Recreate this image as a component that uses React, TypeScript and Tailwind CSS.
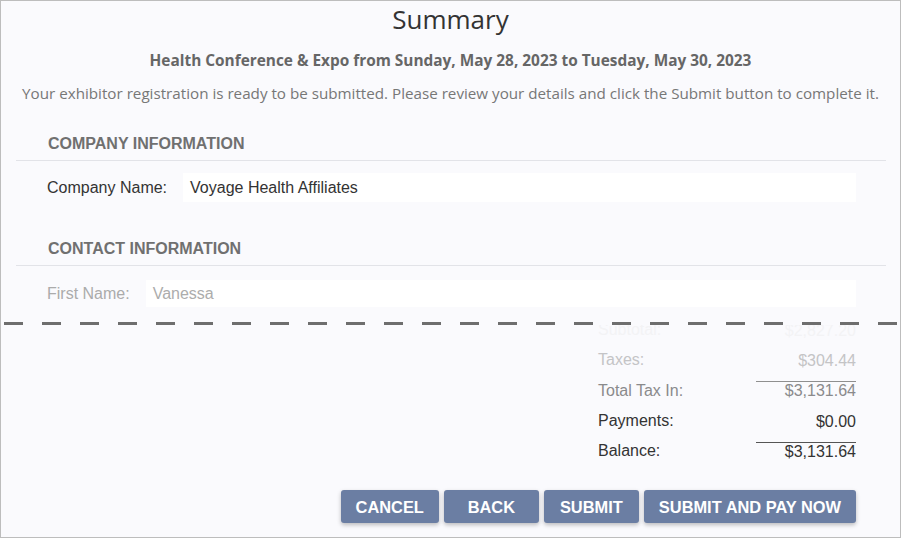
const totals = [
  { label: "Subtotal:", value: "$2,827.20", tone: "text-[#f3f3f5]", line: "border-transparent" },
  { label: "Taxes:", value: "$304.44", tone: "text-[#c4c4c6]", line: "border-transparent" },
  { label: "Total Tax In:", value: "$3,131.64", tone: "text-[#8a8a8c]", line: "border-[#8f8f8f]" },
  { label: "Payments:", value: "$0.00", tone: "text-[#333]", line: "border-transparent" },
  { label: "Balance:", value: "$3,131.64", tone: "text-[#333]", line: "border-[#555]" },
];

const buttons = ["CANCEL", "BACK", "SUBMIT", "SUBMIT AND PAY NOW"];

function SectionHeader({ title, className }: { title: string; className: string }) {
  return (
    <div className={`ml-[15px] mr-[14px] border-b border-[#e2e3e8] pb-[6px] pl-[32px] ${className}`}>
      <h3 className="font-['Liberation_Sans',Arial,sans-serif] text-[16px] font-bold leading-[20px] text-[#707070]">
        {title}
      </h3>
    </div>
  );
}

export default function App() {
  return (
    <div className="flex h-[538px] w-[901px] flex-col overflow-hidden border border-[#bdbdbd] bg-[#fafafd]">
      {/* top of the summary, cut off */}
      <div className="h-[320px] shrink-0 overflow-hidden">
        <h1 className="text-center font-['Open_Sans',sans-serif] text-[26px] leading-[36px] text-[#333]">
          Summary
        </h1>
        <p className="mt-[14px] text-center font-['Open_Sans',sans-serif] text-[15.4px] font-bold leading-[20px] text-[#666]">
          Health Conference &amp; Expo from Sunday, May 28, 2023 to Tuesday, May 30, 2023
        </p>
        <p className="mt-[12px] text-center font-['Open_Sans',sans-serif] text-[15.2px] leading-[20px] text-[#777]">
          Your exhibitor registration is ready to be submitted. Please review your details and click the Submit button to complete it.
        </p>

        <SectionHeader title="COMPANY INFORMATION" className="mt-[31px]" />
        <div className="mr-[44px] flex items-center gap-[16px] pl-[46px] pt-[12px] font-['Liberation_Sans',Arial,sans-serif] text-[16px]">
          <span className="text-[#333]">Company Name:</span>
          <div className="flex h-[29px] flex-1 items-center bg-white px-[7px] text-[#333]">Voyage Health Affiliates</div>
        </div>

        <SectionHeader title="CONTACT INFORMATION" className="mt-[37px]" />
        <div className="mr-[44px] flex items-center gap-[16px] pl-[46px] pt-[14px] font-['Liberation_Sans',Arial,sans-serif] text-[16px]">
          <span className="text-[#ababab]">First Name:</span>
          <div className="flex h-[27px] flex-1 items-center bg-white px-[7px] text-[#acacac]">Vanessa</div>
        </div>
      </div>

      {/* torn edge */}
      <div className="mt-[1px] h-[3px] shrink-0 bg-[repeating-linear-gradient(90deg,#6e6e6e_0_19px,transparent_19px_38px)] bg-[position:3px_0]" />

      {/* bottom of the summary */}
      <div className="flex flex-1 flex-col overflow-hidden">
        <div className="-mt-[10px] flex flex-col pl-[597px] pr-[44px] font-['Liberation_Sans',Arial,sans-serif] text-[16px]">
          {totals.map((row) => (
            <div key={row.label} className={`flex h-[30.3px] items-center justify-between ${row.tone}`}>
              <span>{row.label}</span>
              <span className={`w-[100px] border-t text-right leading-[18px] ${row.line}`}>{row.value}</span>
            </div>
          ))}
        </div>

        <div className="mr-[44px] mt-[24px] flex justify-end gap-[5px]">
          {buttons.map((b) => (
            <button
              key={b}
              className="h-[33px] min-w-[95px] rounded-[3px] bg-[#6b7ea3] px-[15px] font-['Liberation_Sans',Arial,sans-serif] text-[16.4px] font-bold text-white shadow-[0_2px_4px_rgba(0,0,0,0.25)]"
            >
              {b}
            </button>
          ))}
        </div>
      </div>
    </div>
  );
}
